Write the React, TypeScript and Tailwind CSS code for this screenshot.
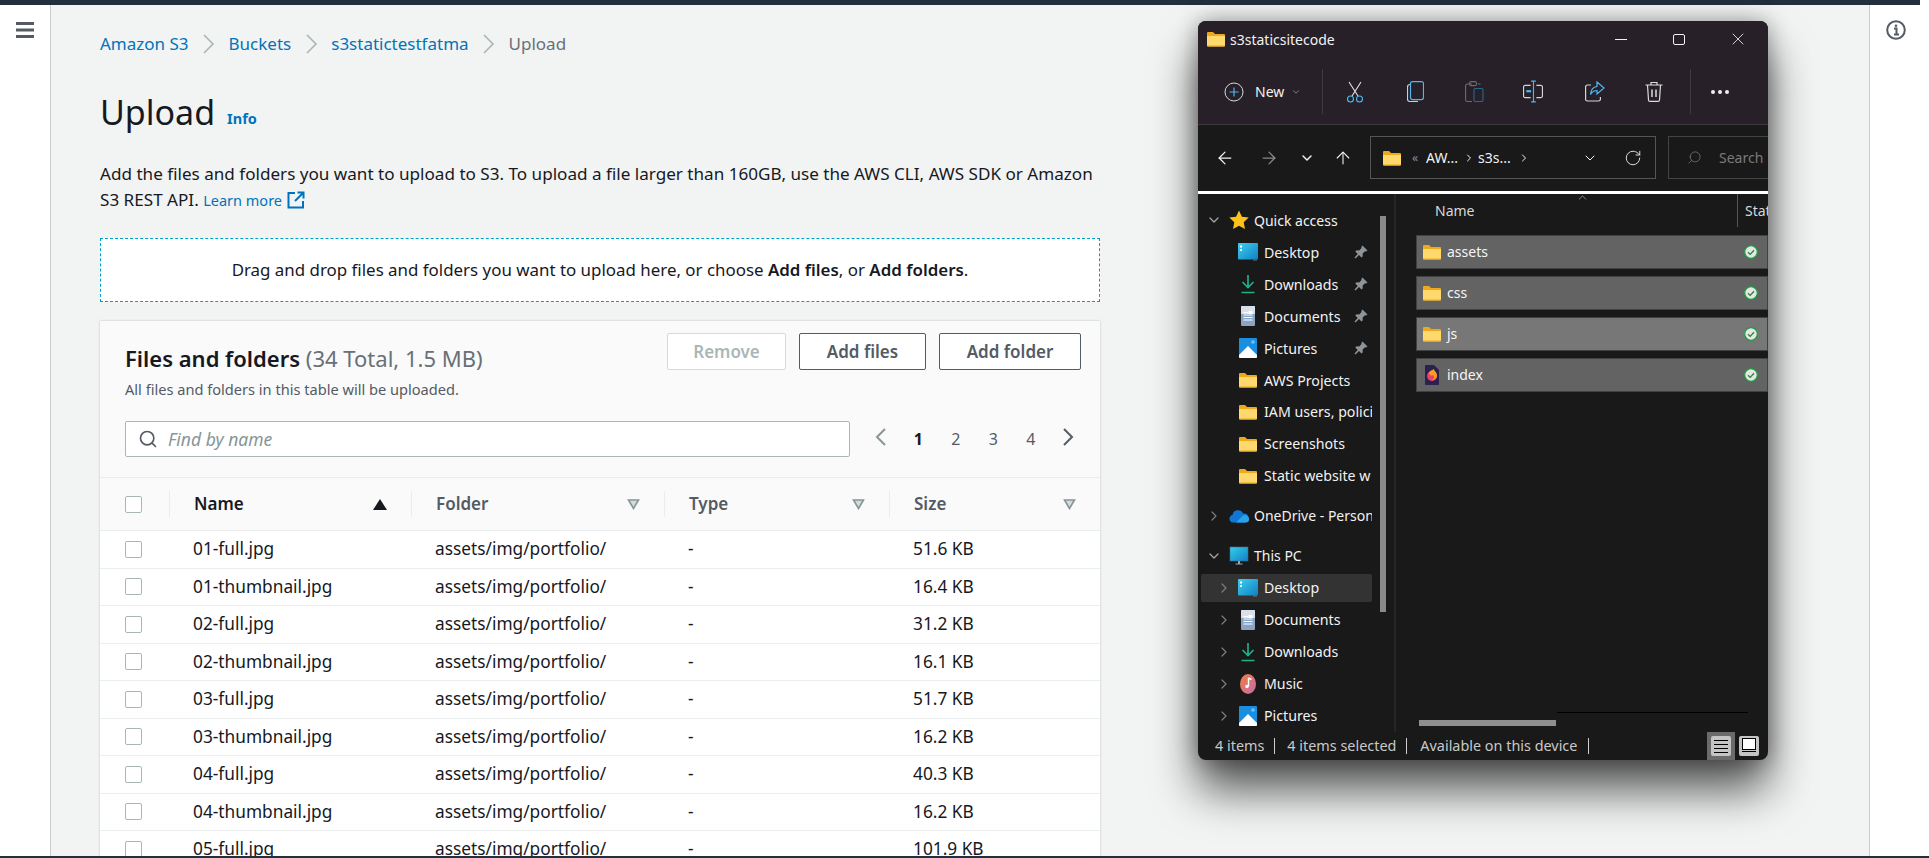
import type { ReactNode } from 'react';
import { ChevronDown, ChevronRight, ChevronUp, ArrowLeft, ArrowRight, ArrowUp, RotateCw, Search, X } from 'lucide-react';

const rows = [
  ['01-full.jpg', '51.6 KB'],
  ['01-thumbnail.jpg', '16.4 KB'],
  ['02-full.jpg', '31.2 KB'],
  ['02-thumbnail.jpg', '16.1 KB'],
  ['03-full.jpg', '51.7 KB'],
  ['03-thumbnail.jpg', '16.2 KB'],
  ['04-full.jpg', '40.3 KB'],
  ['04-thumbnail.jpg', '16.2 KB'],
  ['05-full.jpg', '101.9 KB'],
];

const gridCols = 'grid grid-cols-[69px_242px_253px_225px_211px]';

function Crumb({ label, last }: { label: string; last?: boolean }) {
  if (last) return <span className="text-[#687078]">{label}</span>;
  return (
    <>
      <span className="text-[#0073bb]">{label}</span>
      <svg width="13" height="22" viewBox="0 0 13 22" className="mx-[13.500px]" fill="none" stroke="#aab7b8" strokeWidth="1.6">
        <path d="M2 2l9 9-9 9" />
      </svg>
    </>
  );
}

function Checkbox() {
  return <div className="h-[17px] w-[17px] rounded-[2px] border border-[#aab7b8] bg-white" />;
}

function HeaderCell({ label, dark, sort }: { label: string; dark?: boolean; sort?: boolean }) {
  return (
    <div className="flex h-[26px] items-center justify-between border-l border-[#eaeded] pl-[24px] pr-[24px]">
      <span className={`font-semibold ${dark ? 'text-[#16191f]' : 'text-[#545b64]'}`}>{label}</span>
      {sort ? (
        <svg width="14" height="11" viewBox="0 0 14 11"><path d="M7 0l7 11H0z" fill="#16191f" /></svg>
      ) : (
        <svg width="13" height="11" viewBox="0 0 13 11"><path d="M1.500 1h10L6.500 9.500z" fill="#d5dbdb" stroke="#879596" strokeWidth="1.600" /></svg>
      )}
    </div>
  );
}

function FolderIcon({ className = '' }: { className?: string }) {
  return (
    <svg width="18" height="16" viewBox="0 0 18 16" className={className}>
      <path d="M0 2a1 1 0 0 1 1-1h5l2 2h9a1 1 0 0 1 1 1v3H0z" fill="#eca91b" />
      <path d="M0 5h18v9.500a1 1 0 0 1-1 1H1a1 1 0 0 1-1-1z" fill="#ffd86e" />
      <path d="M0 14.500h18v.3a.8.8 0 0 1-.8.7H.8a.8.8 0 0 1-.8-.7z" fill="#eca91b" />
    </svg>
  );
}

function DesktopIcon() {
  return (
    <svg width="20" height="18" viewBox="0 0 20 18">
      <defs>
        <linearGradient id="desk" x1="0" y1="0" x2="1" y2="1">
          <stop offset="0" stopColor="#3fd0ee" />
          <stop offset="1" stopColor="#0f7fc4" />
        </linearGradient>
      </defs>
      <rect width="20" height="16.500" rx="1" fill="url(#desk)" />
      <rect x="2" y="2.500" width="2" height="2" fill="#fff" />
      <rect x="2" y="6" width="2" height="2" fill="#e6fbff" />
      <rect x="15.500" y="16.600" width="1" height="1" fill="#9ad" />
      <rect x="17.500" y="16.600" width="1" height="1" fill="#9ad" />
    </svg>
  );
}

function DownloadIcon() {
  return (
    <svg width="16" height="20" viewBox="0 0 16 20" fill="none" stroke="#21b08c" strokeWidth="1.700">
      <path d="M8 1v12M2.500 8L8 13.500 13.500 8" />
      <path d="M1.500 18.500h13" />
    </svg>
  );
}

function DocumentIcon() {
  return (
    <svg width="14" height="20" viewBox="0 0 14 20">
      <rect width="14" height="20" rx="1" fill="#8aa4c4" />
      <path d="M0 1a1 1 0 0 1 1-1h12a1 1 0 0 1 1 1v7H0z" fill="#d7e1ee" />
      <path d="M2.500 6.500H7M2.500 9H11.500M2.500 11.500H11.500M2.500 14H11.500" stroke="#fff" strokeWidth="1" />
      <rect x="7.500" y="5" width="4" height="3" fill="#fff" />
    </svg>
  );
}

function PicturesIcon() {
  return (
    <svg width="18" height="20" viewBox="0 0 18 20">
      <rect width="18" height="20" rx="1" fill="#1a8ee0" />
      <path d="M0 17l9-9 9 9v2a1 1 0 0 1-1 1H1a1 1 0 0 1-1-1z" fill="#fff" />
      <circle cx="14" cy="4" r="1.800" fill="#6fc3f5" />
    </svg>
  );
}

function MusicIcon() {
  return (
    <svg width="16" height="20" viewBox="0 0 16 20">
      <defs>
        <linearGradient id="music" x1="0" y1="0" x2="1" y2="1">
          <stop offset="0" stopColor="#ee7f3f" />
          <stop offset="1" stopColor="#c76bb0" />
        </linearGradient>
      </defs>
      <ellipse cx="8" cy="10" rx="8" ry="10" fill="url(#music)" />
      <path d="M8.500 4v8.500" stroke="#fff" strokeWidth="1.400" />
      <path d="M8.500 4l3 1.500" stroke="#fff" strokeWidth="1.400" />
      <circle cx="7" cy="12.500" r="1.700" fill="#fff" />
    </svg>
  );
}

function StarIcon() {
  return (
    <svg width="20" height="20" viewBox="0 0 20 20">
      <path d="M10 0.500l2.900 6.300 6.800.8-5 4.700 1.300 6.800L10 15.700l-6 3.400 1.300-6.800-5-4.700 6.800-.8z" fill="#fcc21b" />
    </svg>
  );
}

function CloudIcon() {
  return (
    <svg width="20" height="14" viewBox="0 0 20 14">
      <path d="M4 13.500a3.800 3.800 0 0 1-.5-7.500A5.500 5.500 0 0 1 14 4.500a4.500 4.500 0 0 1 2 9z" fill="#0f78d4" />
      <path d="M7 13.500l6-6a4 4 0 0 1 7 3 3 3 0 0 1-3 3z" fill="#2aa3ec" />
    </svg>
  );
}

function PcIcon() {
  return (
    <svg width="20" height="20" viewBox="0 0 20 20">
      <defs>
        <linearGradient id="pc" x1="0" y1="0" x2="1" y2="1">
          <stop offset="0" stopColor="#35d0ea" />
          <stop offset="1" stopColor="#117fc6" />
        </linearGradient>
      </defs>
      <rect x="1" y="1" width="18" height="14" fill="url(#pc)" stroke="#3f6d85" strokeWidth=".6" />
      <path d="M9 15h2v2.500H9zM6.500 17.500h7v1h-7z" fill="#9aa5ad" />
    </svg>
  );
}

function PinIcon() {
  return (
    <svg width="14" height="14" viewBox="0 0 14 14">
      <path d="M8.500 0.500l5 5-1.500 1-1-.3-2.500 2.500.3 2.500-1.300 1.300-2.500-2.500L1.500 13.500l-1-1L3.700 9 1.300 6.500l1.300-1.300 2.500.3L7.600 3l-.3-1z" fill="#8f9499" />
    </svg>
  );
}

function SideRow({ icon, label, chevron, level, pinned, active, className = '' }: {
  icon: ReactNode;
  label: string;
  chevron?: 'down' | 'right';
  level?: boolean;
  pinned?: boolean;
  active?: boolean;
  className?: string;
}) {
  return (
    <div className={`ml-[3px] flex w-[171px] items-center overflow-hidden whitespace-nowrap rounded-[2px] ${level ? 'pl-[17px]' : 'pl-[7px]'} ${active ? 'my-[2px] h-[28px] bg-[#333333]' : 'h-[31.950px]'} ${className}`}>
      <div className="flex w-[12px] shrink-0 justify-center">
        {chevron === 'down' && <ChevronDown size={16} strokeWidth={1.800} className="shrink-0 text-[#a9a9a9]" />}
        {chevron === 'right' && <ChevronRight size={16} strokeWidth={1.800} className="shrink-0 text-[#7d7d7d]" />}
      </div>
      <div className={`flex shrink-0 justify-center ${level ? 'ml-[6px] w-[24px]' : 'ml-[6px] w-[26px]'}`}>{icon}</div>
      <span className={`text-[#f2f2f2] ${level ? 'ml-[4px] text-[14.200px]' : 'ml-[2px] text-[14px]'}`}>{label}</span>
      {pinned && <span className="ml-auto pr-[4px]"><PinIcon /></span>}
    </div>
  );
}

function CheckBadge() {
  return (
    <svg width="14" height="14" viewBox="0 0 14 14">
      <circle cx="7" cy="7" r="6.300" fill="#e3e8e3" stroke="#1f9d3d" strokeWidth="1.200" />
      <path d="M4 7.200l2.200 2.200L10 5.200" fill="none" stroke="#2e7d44" strokeWidth="1.300" />
    </svg>
  );
}

function FirefoxDoc() {
  return (
    <svg width="14" height="20" viewBox="0 0 14 20">
      <path d="M0 1a1 1 0 0 1 1-1h8l5 5v14a1 1 0 0 1-1 1H1a1 1 0 0 1-1-1z" fill="#2b2150" />
      <circle cx="7" cy="11" r="5" fill="#ec3f6b" />
      <path d="M4 8c1-3 4-3 5-4 0 2 3 3 3 7a5 5 0 0 1-6 4c3 0 4-3 2-5-1 1-3 1-4-2z" fill="#ff9b20" />
    </svg>
  );
}

function FileRow({ icon, label, light }: { icon: ReactNode; label: string; light?: boolean }) {
  return (
    <div className={`flex h-[34px] items-center border border-[#414141] pl-[6px] pr-[9px] ${light ? 'bg-[#777777]' : 'bg-[#636363]'}`}>
      <div className="flex w-[18px] justify-center">{icon}</div>
      <span className="ml-[6px] text-[14px] text-[#f5f5f5]">{label}</span>
      <span className="ml-auto"><CheckBadge /></span>
    </div>
  );
}

function Explorer() {
  return (
    <div className="absolute left-[1198px] top-[21px] flex h-[739px] w-[570px] flex-col overflow-hidden rounded-[8px] bg-[#191919] font-['Noto_Sans',sans-serif] shadow-[0_30px_45px_rgba(0,0,0,0.65),0_0_22px_rgba(0,0,0,0.35)]">
      <div className="bg-[#272028]">
        <div className="flex h-[38px] items-center pb-[2px] pl-[9px] text-[#f2f2f2]">
          <FolderIcon />
          <span className="ml-[5px] text-[14px]">s3staticsitecode</span>
          <div className="ml-auto flex items-center">
            <span className="flex w-[58px] justify-center"><span className="h-px w-[12px] bg-[#f2f2f2]" /></span>
            <span className="flex w-[58px] justify-center"><span className="h-[11px] w-[12px] rounded-[2px] border border-[#f2f2f2]" /></span>
            <span className="flex w-[60px] justify-center pr-[1px]"><X size={20} strokeWidth={1} /></span>
          </div>
        </div>
        <div className="flex h-[66px] items-center border-b border-[#3b3b3b] pl-[26px] text-[#f2f2f2]">
          <svg width="20" height="20" viewBox="0 0 20 20" fill="none">
            <circle cx="10" cy="10" r="9" stroke="#d8d8d8" strokeWidth="1" />
            <path d="M10 5.500v9M5.500 10h9" stroke="#4fb6ef" strokeWidth="1.200" />
          </svg>
          <span className="ml-[11px] text-[14px]">New</span>
          <ChevronDown size={10} strokeWidth={1.500} className="ml-[7px] text-[#bdbdbd]" />
          <div className="ml-[21px] h-[45px] w-px bg-[#3f3a40]" />
          <div className="ml-[22px] flex w-[20px] justify-center">
            <svg width="18" height="22" viewBox="0 0 18 22" fill="none" strokeWidth="1.100">
              <path d="M3 1l9 14M15 1L6 15" stroke="#e4e4e4" />
              <circle cx="4.500" cy="18" r="3" stroke="#4fb6ef" />
              <circle cx="13.500" cy="18" r="3" stroke="#4fb6ef" />
            </svg>
          </div>
          <div className="ml-[40px] flex w-[20px] justify-center">
            <svg width="17" height="21" viewBox="0 0 17 21" fill="none" strokeWidth="1.200">
              <path d="M3 3.500c-1.500 0-2.500 1-2.500 2.500v12c0 1.500 1 2.500 2.500 2.500h8" stroke="#cfcfcf" />
              <rect x="3.500" y="0.600" width="13" height="18" rx="2" stroke="#4fb6ef" />
            </svg>
          </div>
          <div className="ml-[39px] flex w-[20px] justify-center">
            <svg width="19" height="21" viewBox="0 0 19 21" fill="none" strokeWidth="1.100">
              <path d="M7 3H2.500A1.800 1.800 0 0 0 .6 5v14a1.800 1.800 0 0 0 1.900 1.500H7M13 3h2.500" stroke="#6d6a6d" />
              <rect x="4.500" y="0.600" width="7" height="4" rx="1.500" stroke="#6d6a6d" />
              <rect x="9" y="7.500" width="9" height="13" rx="1.500" stroke="#2a6a8f" />
            </svg>
          </div>
          <div className="ml-[39px] flex w-[20px] justify-center">
            <svg width="21" height="23" viewBox="0 0 21 23" fill="none" strokeWidth="1.200">
              <path d="M8 5H2.500A1.800 1.800 0 0 0 .6 7v9a1.800 1.800 0 0 0 1.900 2H8M14 5h4.500A1.800 1.800 0 0 1 20.400 7v9a1.800 1.800 0 0 1-1.900 2H14" stroke="#d5d5d5" />
              <path d="M11 .6v21.800M8.500.6h5M8.500 22.400h5" stroke="#4fb6ef" />
              <rect x="3.500" y="10" width="5" height="2.400" fill="#4fb6ef" />
            </svg>
          </div>
          <div className="ml-[42px] flex w-[20px] justify-center">
            <svg width="20" height="21" viewBox="0 0 20 21" fill="none" strokeWidth="1.200">
              <path d="M6 4H2.500A1.800 1.800 0 0 0 .6 6v12a1.800 1.800 0 0 0 1.900 2h11a1.800 1.800 0 0 0 1.900-2v-2" stroke="#d5d5d5" />
              <path d="M12 1l7 6-7 6V9.500c-3 0-5 1.500-6.500 4 .3-4 2.500-7.500 6.500-8z" stroke="#4fb6ef" />
            </svg>
          </div>
          <div className="ml-[39px] flex w-[20px] justify-center">
            <svg width="18" height="21" viewBox="0 0 18 21" fill="none" stroke="#dcdcdc" strokeWidth="1.200">
              <path d="M.5 4h17M6 4V1.500h6V4M2.500 4l1 15a1.500 1.500 0 0 0 1.500 1.400h8a1.500 1.500 0 0 0 1.500-1.400l1-15" />
              <path d="M7 8.500v7.500M11 8.500v7.500" strokeWidth="1.500" />
            </svg>
          </div>
          <div className="ml-[26px] h-[45px] w-px bg-[#3f3a40]" />
          <div className="ml-[20px] flex gap-[3px]">
            <span className="h-[4px] w-[4px] rounded-full bg-[#eeeeee]" />
            <span className="h-[4px] w-[4px] rounded-full bg-[#eeeeee]" />
            <span className="h-[4px] w-[4px] rounded-full bg-[#eeeeee]" />
          </div>
        </div>
      </div>

      <div className="flex h-[66px] items-start pt-[11px] text-[#f2f2f2]">
        <div className="flex h-[43px] w-[172px] items-center pl-[17px]">
          <ArrowLeft size={20} strokeWidth={1.500} />
          <ArrowRight size={20} strokeWidth={1.500} className="ml-[24px] text-[#8a8a8a]" />
          <ChevronDown size={16} strokeWidth={2.200} className="ml-[20px]" />
          <ArrowUp size={20} strokeWidth={1.300} className="ml-[18px]" />
        </div>
        <div className="flex h-[43px] w-[286px] shrink-0 items-center border border-[#555555] pl-[12px] text-[14px]">
          <FolderIcon className="shrink-0" />
          <span className="ml-[11px] w-[14px] text-[12px] text-[#8e8e8e]">«</span>
          <span className="w-[37px]">AW...</span>
          <ChevronRight size={12} strokeWidth={2} className="shrink-0" />
          <span className="ml-[3px] w-[40px]">s3s...</span>
          <ChevronRight size={12} strokeWidth={2} className="shrink-0" />
          <ChevronDown size={16} strokeWidth={1.500} className="ml-[52px] shrink-0" />
          <RotateCw size={18} strokeWidth={1.200} className="ml-[26px] shrink-0" />
        </div>
        <div className="ml-[12px] flex h-[43px] min-w-0 flex-1 items-center overflow-hidden whitespace-nowrap border border-r-0 border-[#444444] pl-[18px] text-[14px] text-[#7b7b7b]">
          <Search size={15} strokeWidth={1.200} className="shrink-0 -scale-x-100" />
          <span className="ml-[17px]">Search</span>
        </div>
      </div>
      <div className="h-[2.500px] bg-white" />

      <div className="flex min-h-0 flex-1">
        <div className="relative w-[198px] shrink-0 overflow-hidden border-r-[2px] border-[#252525] pt-[11px]">
          <SideRow chevron="down" icon={<StarIcon />} label="Quick access" />
          <SideRow level icon={<DesktopIcon />} label="Desktop" pinned />
          <SideRow level icon={<DownloadIcon />} label="Downloads" pinned />
          <SideRow level icon={<DocumentIcon />} label="Documents" pinned />
          <SideRow level icon={<PicturesIcon />} label="Pictures" pinned />
          <SideRow level icon={<FolderIcon />} label="AWS Projects" />
          <SideRow level icon={<FolderIcon />} label="IAM users, polici" />
          <SideRow level icon={<FolderIcon />} label="Screenshots" />
          <SideRow level icon={<FolderIcon />} label="Static website w" />
          <SideRow chevron="right" icon={<CloudIcon />} label="OneDrive - Person" className="mt-[8px]" />
          <SideRow chevron="down" icon={<PcIcon />} label="This PC" className="mt-[8px]" />
          <SideRow level chevron="right" icon={<DesktopIcon />} label="Desktop" active />
          <SideRow level chevron="right" icon={<DocumentIcon />} label="Documents" />
          <SideRow level chevron="right" icon={<DownloadIcon />} label="Downloads" />
          <SideRow level chevron="right" icon={<MusicIcon />} label="Music" />
          <SideRow level chevron="right" icon={<PicturesIcon />} label="Pictures" />
          <div className="absolute left-[182px] top-[22px] h-[396px] w-[6px] bg-[#8a8a8a]" />
        </div>
        <div className="relative min-w-0 flex-1 overflow-hidden pl-[20px]">
          <div className="flex h-[33px] items-center whitespace-nowrap text-[14px] text-[#d8d8d8]">
            <span className="ml-[19px] w-[302px] shrink-0">Name</span>
            <ChevronUp size={13} strokeWidth={1.200} className="absolute left-[180px] top-[-3px] text-[#c8c8c8]" />
            <div className="h-[33px] w-px shrink-0 bg-[#555555]" />
            <span className="ml-[7px]">Status</span>
          </div>
          <div className="mt-[8px] flex flex-col gap-[7px]">
            <FileRow icon={<FolderIcon />} label="assets" />
            <FileRow icon={<FolderIcon />} label="css" />
            <FileRow icon={<FolderIcon />} label="js" light />
            <FileRow icon={<FirefoxDoc />} label="index" />
          </div>
          <div className="absolute left-[161px] top-[518px] h-px w-[191px] bg-black" />
          <div className="absolute left-[23px] top-[526px] h-[6px] w-[137px] bg-[#8f8f8f]" />
        </div>
      </div>

      <div className="flex h-[28px] shrink-0 items-center pl-[17px] text-[14.400px] text-[#c9c9c9]">
        <span>4 items</span>
        <span className="ml-[10px] h-[16px] w-px bg-[#d0d0d0]" />
        <span className="ml-[12px]">4 items selected</span>
        <span className="ml-[10px] h-[16px] w-px bg-[#d0d0d0]" />
        <span className="ml-[13px]">Available on this device</span>
        <span className="ml-[11px] h-[16px] w-px bg-[#d0d0d0]" />
        <div className="ml-auto flex h-full items-center">
          <div className="flex h-full w-[28px] items-center justify-center bg-[#6b6b6b]">
            <div className="flex h-[20px] w-[20px] flex-col justify-center gap-[3px] rounded-[2px] bg-[#c4c4c4] px-[3px]">
              <span className="h-px bg-black" />
              <span className="h-px bg-black" />
              <span className="h-px bg-black" />
              <span className="h-px bg-black" />
            </div>
          </div>
          <div className="ml-[4px] mr-[9px] flex h-[20px] w-[20px] flex-col items-center rounded-[2px] bg-[#c4c4c4] px-[3px] pt-[2px]">
            <span className="h-[12px] w-full border border-black bg-white" />
            <span className="mt-[1px] h-px w-full bg-black" />
          </div>
        </div>
      </div>
    </div>
  );
}

function PageArrow({ dim, left }: { dim?: boolean; left?: boolean }) {
  return (
    <svg width="13" height="20" viewBox="0 0 13 20" fill="none" stroke={dim ? '#879596' : '#545b64'} strokeWidth="2">
      <path d={left ? 'M11 2L3 10l8 8' : 'M2 2l8 8-8 8'} />
    </svg>
  );
}

export default function App() {
  return (
    <div className="relative flex h-[858px] w-[1929px] flex-col overflow-hidden bg-white font-['Noto_Sans',sans-serif] text-[#16191f]">
      <div className="h-[5px] w-[1920px] shrink-0 bg-[#232f3e]" />
      <div className="flex min-h-0 flex-1">
        <aside className="w-[51px] shrink-0 border-r border-[#c9cccc] pl-[16px] pt-[17px]">
          <svg width="18" height="16" viewBox="0 0 18 16" fill="#545b64">
            <rect width="18" height="3" />
            <rect y="6.500" width="18" height="3" />
            <rect y="13" width="18" height="3" />
          </svg>
        </aside>
        <main className="min-w-0 flex-1 overflow-hidden bg-[#f2f3f3] pl-[49px] pt-[27px]">
          <div className="w-[1000px]">
            <nav className="flex h-[24px] items-center text-[17px]">
              <Crumb label="Amazon S3" />
              <Crumb label="Buckets" />
              <Crumb label="s3statictestfatma" />
              <Crumb label="Upload" last />
            </nav>
            <div className="mt-[35px] flex h-[42px] items-center">
              <h1 className="text-[34px] font-normal leading-[42px]">Upload</h1>
              <span className="ml-[12px] mt-[14px] text-[14.500px] font-bold text-[#0073bb]">Info</span>
            </div>
            <p className="mt-[28px] text-[17.100px] leading-[25.500px]">
              Add the files and folders you want to upload to S3. To upload a file larger than 160GB, use the AWS CLI, AWS SDK or Amazon S3 REST API.{' '}
              <span className="text-[14.500px] text-[#0073bb]">Learn more</span>
              <svg width="18" height="18" viewBox="0 0 18 18" fill="none" stroke="#0073bb" strokeWidth="2" className="ml-[5px] inline align-[-3px]">
                <path d="M8 2H1.500v14.500H16V10M10.500 1.500h6v6M16 2L8 10" />
              </svg>
            </p>
            <div className="mt-[25px] flex h-[64px] items-center justify-center border border-dashed border-[#00a1c9] bg-white text-[16.900px]">
              <span>Drag and drop files and folders you want to upload here, or choose <b className="font-semibold">Add files</b>, or <b className="font-semibold">Add folders</b>.</span>
            </div>

            <section className="mt-[19px] bg-white shadow-[0_0_2px_rgba(0,28,36,0.25)]">
              <div className="border-b border-[#eaeded] bg-[#fafafa] pb-[20px] pl-[25px] pr-[13px] pt-[12px]">
                <div className="flex items-start justify-between">
                  <div className="pt-[12px]">
                    <h2 className="text-[22px] leading-[26px]">
                      <span className="font-semibold">Files and folders</span>{' '}
                      <span className="text-[#687078]">(34 Total, 1.5 MB)</span>
                    </h2>
                    <p className="mt-[8px] text-[14.600px] leading-[20px] text-[#545b64]">All files and folders in this table will be uploaded.</p>
                  </div>
                  <div className="mr-[6px] flex gap-[13px] text-[17px] font-semibold">
                    <button type="button" className="h-[37px] w-[119px] rounded-[2px] border border-[#d5dbdb] bg-white text-[#aab7b8]">Remove</button>
                    <button type="button" className="h-[37px] w-[127px] rounded-[2px] border border-[#545b64] bg-white text-[#545b64]">Add files</button>
                    <button type="button" className="h-[37px] w-[142px] rounded-[2px] border border-[#545b64] bg-white text-[#545b64]">Add folder</button>
                  </div>
                </div>
                <div className="mt-[22px] flex items-center">
                  <div className="flex h-[36px] w-[725px] items-center rounded-[2px] border border-[#aab7b8] bg-white pl-[12px]">
                    <Search size={20} strokeWidth={2} className="text-[#545b64]" />
                    <span className="ml-[10px] text-[17.500px] italic text-[#879596]">Find by name</span>
                  </div>
                  <div className="ml-[12px] flex w-[225px] shrink-0 text-[16px] text-[#545b64]">
                    <span className="flex w-[37.500px] justify-center"><PageArrow dim left /></span>
                    <span className="flex w-[37.500px] justify-center font-bold text-[#16191f]">1</span>
                    <span className="flex w-[37.500px] justify-center">2</span>
                    <span className="flex w-[37.500px] justify-center">3</span>
                    <span className="flex w-[37.500px] justify-center">4</span>
                    <span className="flex w-[37.500px] justify-center"><PageArrow /></span>
                  </div>
                </div>
              </div>
              <div className={`${gridCols} h-[53px] items-center border-b border-[#eaeded] bg-[#fafafa] text-[17px]`}>
                <div className="pl-[25px]"><Checkbox /></div>
                <HeaderCell label="Name" dark sort />
                <HeaderCell label="Folder" />
                <HeaderCell label="Type" />
                <HeaderCell label="Size" />
              </div>
              {rows.map(([name, size]) => (
                <div key={name} className={`${gridCols} h-[37.500px] items-center border-b border-[#eaeded] bg-white text-[17.300px]`}>
                  <div className="pl-[25px]"><Checkbox /></div>
                  <div className="pl-[24px]">{name}</div>
                  <div className="pl-[24px]">assets/img/portfolio/</div>
                  <div className="pl-[24px]">-</div>
                  <div className="pl-[24px]">{size}</div>
                </div>
              ))}
            </section>
          </div>
        </main>
        <aside className="flex w-[60px] shrink-0 justify-center border-l border-[#c9cccc] pr-[8px] pt-[15px]">
          <svg width="20" height="20" viewBox="0 0 20 20" fill="none">
            <circle cx="10" cy="10" r="8.800" stroke="#545b64" strokeWidth="2" />
            <path d="M8 8.500h2.500V14M8 14.500h5" stroke="#545b64" strokeWidth="2" />
            <circle cx="10" cy="5.800" r="1.300" fill="#545b64" />
          </svg>
        </aside>
      </div>
      <div className="h-[2px] shrink-0 bg-[#232f3e]" />
      <Explorer />
    </div>
  );
}
